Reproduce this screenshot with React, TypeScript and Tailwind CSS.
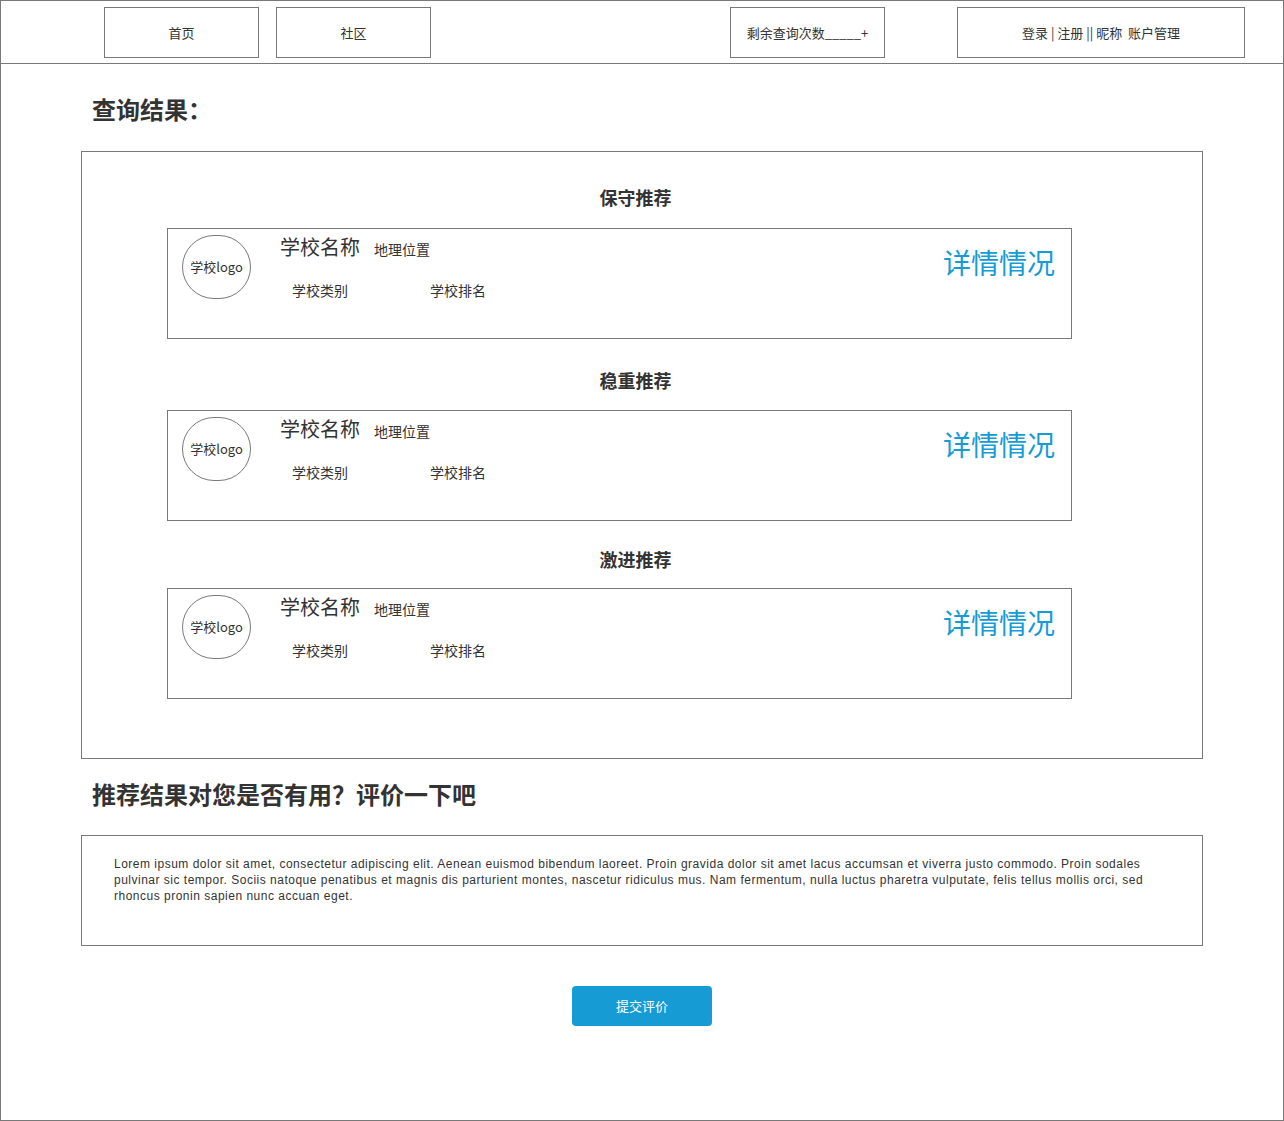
const CJK = '"Noto Sans CJK SC", "Liberation Sans", sans-serif'

function NavBox({ label, className = '' }: { label: string; className?: string }) {
  return (
    <div
      className={`h-[51px] border border-[#797979] flex items-center justify-center text-[13px] text-[#333333] ${className}`}
    >
      {label}
    </div>
  )
}

function SchoolCard() {
  return (
    <div className="ml-[85px] w-[905px] h-[111px] border border-[#797979] flex items-start">
      <div className="ml-[14px] mt-[6px] w-[69px] h-[64px] rounded-full border border-[#797979] flex items-center justify-center text-[13px] text-[#333333]">
        学校logo
      </div>
      <div className="ml-[29px] flex flex-col">
        <div className="mt-[6px] flex items-baseline">
          <span className="text-[20px] leading-[24px] text-[#333333]">学校名称</span>
          <span className="ml-[14px] text-[14px] text-[#333333]">地理位置</span>
        </div>
        <div className="mt-[20px] pl-[12px] flex text-[14px] leading-[20px] text-[#333333]">
          <span>学校类别</span>
          <span className="ml-[82px]">学校排名</span>
        </div>
      </div>
      <div className="ml-auto mr-[16px] mt-[17px] text-[28px] leading-[32px] text-[#169BD5]">
        详情情况
      </div>
    </div>
  )
}

function SectionTitle({ text, className = '' }: { text: string; className?: string }) {
  return (
    <div className={`pr-[13px] text-center text-[18px] leading-[24px] font-bold text-[#333333] ${className}`}>
      {text}
    </div>
  )
}

export default function App() {
  return (
    <div
      className="w-[1284px] h-[1121px] border border-[#797979] bg-white text-[#333333]"
      style={{ fontFamily: CJK }}
    >
      {/* Header */}
      <div className="h-[63px] border-b border-[#797979] flex items-start pt-[6px]">
        <NavBox label="首页" className="ml-[103px] w-[155px]" />
        <NavBox label="社区" className="ml-[17px] w-[155px]" />
        <NavBox label="剩余查询次数_____+" className="ml-[299px] w-[155px]" />
        <NavBox label="登录 | 注册 || 昵称  账户管理" className="ml-[72px] w-[288px] whitespace-pre" />
      </div>

      {/* Results */}
      <div className="pl-[91px] pt-[32px] text-[24px] leading-[26px] font-bold text-[#333333]">
        查询结果：
      </div>
      <div className="mt-[29px] ml-[80px] w-[1122px] h-[608px] border border-[#797979] flex flex-col">
        <SectionTitle text="保守推荐" className="mt-[33px]" />
        <div className="mt-[19px]">
          <SchoolCard />
        </div>
        <SectionTitle text="稳重推荐" className="mt-[29px]" />
        <div className="mt-[18px]">
          <SchoolCard />
        </div>
        <SectionTitle text="激进推荐" className="mt-[26px]" />
        <div className="mt-[17px]">
          <SchoolCard />
        </div>
      </div>

      {/* Feedback */}
      <div className="mt-[22px] pl-[91px] text-[24px] leading-[26px] font-bold text-[#333333]">
        推荐结果对您是否有用？评价一下吧
      </div>
      <div className="mt-[28px] ml-[80px] w-[1122px] h-[111px] border border-[#797979] pl-[32px] pr-[56px] pt-[20px]">
        <p
          className="text-[12px] leading-[16px] tracking-[0.5px] text-[#333333]"
          style={{ fontFamily: '"Liberation Sans", Arial, sans-serif' }}
        >
          Lorem ipsum dolor sit amet, consectetur adipiscing elit. Aenean euismod bibendum laoreet. Proin gravida dolor sit amet lacus accumsan et viverra justo commodo. Proin sodales pulvinar sic tempor. Sociis natoque penatibus et magnis dis parturient montes, nascetur ridiculus mus. Nam fermentum, nulla luctus pharetra vulputate, felis tellus mollis orci, sed rhoncus pronin sapien nunc accuan eget.
        </p>
      </div>
      <div className="mt-[40px] flex justify-center">
        <button className="w-[140px] h-[40px] rounded-[4px] bg-[#169BD5] text-white text-[13px]">
          提交评价
        </button>
      </div>
    </div>
  )
}
